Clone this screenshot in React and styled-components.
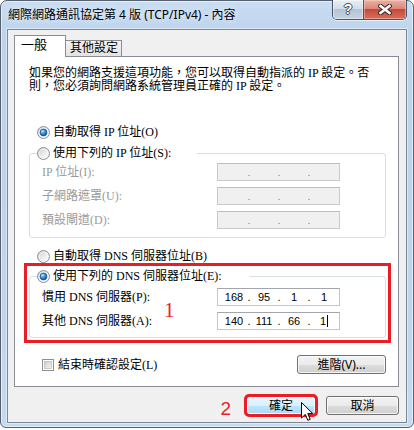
import React, { useId } from "react";
import styled, { createGlobalStyle, css } from "styled-components";

const UI = `"Noto Sans", "Noto Sans CJK TC", sans-serif`;
const BODY = `"Liberation Serif", "Noto Sans CJK TC", serif`;
const RED = "#ec1c24";

const Global = createGlobalStyle`
  html, body { margin: 0; padding: 0; background: #ffffff; }
  body { width: 414px; height: 430px; overflow: hidden; }
  *, *::before, *::after { box-sizing: border-box; }
`;

const Window = styled.div`
  width: 414px;
  height: 428px;
  border: 1px solid #56616d;
  border-radius: 7px 7px 6px 6px;
  background: linear-gradient(180deg, #c9ddf2 0%, #bcd3ec 36px, #bed5ed 70%, #c4daf1 100%);
  box-shadow: inset 0 0 0 1px rgba(255, 255, 255, 0.55);
  display: flex;
  flex-direction: column;
`;

const TitleBar = styled.div`
  height: 28px;
  display: flex;
  align-items: flex-start;
  padding: 0 6px 0 7px;
`;

const Title = styled.div`
  font-family: ${UI};
  font-size: 12px;
  line-height: 28px;
  color: #000;
  white-space: nowrap;
  text-shadow: 0 0 6px rgba(255, 255, 255, 0.95);
`;

const CaptionButtons = styled.div`
  margin-left: auto;
  margin-top: -1px;
  display: flex;
  height: 20px;
  border: 1px solid rgba(38, 52, 70, 0.8);
  border-top: none;
  border-radius: 0 0 5px 5px;
  overflow: hidden;
  box-shadow: 0 1px 0 rgba(255, 255, 255, 0.6);
`;

const HelpButton = styled.div`
  width: 31px;
  border-right: 1px solid rgba(38, 52, 70, 0.8);
  background: linear-gradient(180deg, #e9eef5 0%, #d3dce7 45%, #b6c3d3 50%, #c6d3e2 100%);
  box-shadow: inset 0 0 0 1px rgba(255, 255, 255, 0.45);
  display: flex;
  align-items: center;
  justify-content: center;
  font-family: "Liberation Sans", sans-serif;
  font-weight: bold;
  font-size: 14px;
  line-height: 19px;
  color: #fff;
  text-shadow: 1px 0 0 #3b4a5e, -1px 0 0 #3b4a5e, 0 1px 0 #3b4a5e, 0 -1px 0 #3b4a5e;
`;

const CloseButton = styled.div`
  width: 42px;
  background: linear-gradient(180deg, #eab1a4 0%, #dc8776 45%, #c7483a 50%, #d7705a 100%);
  box-shadow: inset 0 0 0 1px rgba(255, 220, 210, 0.45);
  display: flex;
  align-items: center;
  justify-content: center;
`;

const Client = styled.div`
  margin: 0 6px;
  height: 394px;
  border: 1px solid #7b8795;
  background: #f0f0f0;
  padding: 5px 7px 0 6px;
  box-shadow: 0 0 0 1px rgba(255, 255, 255, 0.45);
  display: flex;
  flex-direction: column;
`;

const TabStrip = styled.div`
  display: flex;
  align-items: flex-end;
  height: 21px;
  position: relative;
  z-index: 1;
`;

const Tab = styled.div`
  font-family: ${UI};
  color: #000;
  white-space: nowrap;
  border: 1px solid #898c95;
  border-bottom: none;
  ${(p) =>
    p.$active
      ? css`
          height: 22px;
          width: 52px;
          margin-bottom: -1px;
          background: #fff;
          font-size: 13px;
          line-height: 16px;
          padding-left: 6px;
          position: relative;
          z-index: 2;
        `
      : css`
          height: 16px;
          width: 57px;
          margin-left: -1px;
          font-size: 12px;
          line-height: 14px;
          padding-left: 4px;
          background: linear-gradient(180deg, #f3f3f3, #e3e3e3);
        `}
`;

const Panel = styled.div`
  height: 331px;
  border: 1px solid #898c95;
  background: #fff;
  padding: 0 12px 0 14px;
  display: flex;
  flex-direction: column;
`;

const Intro = styled.p`
  margin: 10px 0 0;
  font-family: ${BODY};
  font-size: 12px;
  line-height: 13px;
  color: #000;
  white-space: nowrap;
`;

const OptionRow = styled.div`
  display: flex;
  align-items: center;
  gap: 3px;
  height: 16px;
  padding-left: 8px;
  margin-top: ${(p) => p.$mt || 0}px;
  font-family: ${BODY};
  font-size: 12px;
  line-height: 16px;
  color: #000;
  white-space: nowrap;
`;

const Group = styled.fieldset`
  margin: ${(p) => p.$mt || 0}px 0 0;
  padding: ${(p) => p.$pt}px 0 ${(p) => p.$pb}px 0;
  border: 1px solid #d5dfe5;
  border-radius: 3px;
  min-width: 0;
  display: flex;
  flex-direction: column;
  gap: 6px;
`;

const Legend = styled.legend`
  margin-left: 7px;
  padding: 0;
  width: ${(p) => p.$w}px;
  height: 16px;
  display: flex;
  align-items: center;
  gap: 3px;
  font-family: ${BODY};
  font-size: 12px;
  line-height: 16px;
  color: #000;
  white-space: nowrap;
`;

const FieldRow = styled.div`
  display: grid;
  grid-template-columns: 175px 123px;
  align-items: center;
  padding-left: 12px;
  height: 18px;
  font-family: ${BODY};
  font-size: 12px;
  line-height: 16px;
  color: ${(p) => (p.$disabled ? "#9a9a9a" : "#000")};
  white-space: nowrap;
`;

const IpBox = styled.div`
  height: 18px;
  width: 123px;
  display: flex;
  align-items: center;
  padding-left: 3px;
  border: 1px solid ${(p) => (p.$disabled ? "#cacaca" : "#c3c6cc")};
  border-top-color: ${(p) => (p.$disabled ? "#bdbdbd" : "#a3a6ac")};
  background: ${(p) => (p.$disabled ? "#f0f0f0" : "#fff")};
  font-family: "Liberation Sans", sans-serif;
  font-size: 11px;
  line-height: 16px;
  color: ${(p) => (p.$disabled ? "#8a8a8a" : "#000")};
`;

const Octet = styled.span`
  width: 26px;
  display: flex;
  justify-content: center;
  align-items: center;
`;

const Dot = styled.span`
  width: 4px;
  text-align: center;
`;

const Caret = styled.span`
  display: inline-block;
  width: 1px;
  height: 12px;
  margin-left: 1px;
  background: #000;
`;

const Callout = styled.div`
  position: relative;
  margin: -1px -5px 0;
  border: 3px solid ${RED};
  padding: 2px;
`;

const Mark = styled.span`
  position: absolute;
  font-family: "Liberation Serif", serif;
  font-size: ${(p) => p.$size}px;
  line-height: 1;
  color: ${RED};
  left: ${(p) => p.$x}px;
  top: ${(p) => p.$y}px;
`;

const PanelFooter = styled.div`
  margin-top: 12px;
  display: flex;
  align-items: center;
  height: 19px;
`;

const CheckRow = styled.div`
  display: flex;
  align-items: center;
  gap: 4px;
  padding-left: 13px;
  font-family: ${BODY};
  font-size: 12px;
  line-height: 16px;
  color: #000;
  white-space: nowrap;
`;

const Btn = styled.button`
  height: 19px;
  width: ${(p) => p.$w}px;
  margin-left: ${(p) => (p.$auto ? "auto" : `${p.$ml || 0}px`)};
  padding: 0;
  border-radius: 3px;
  font-family: ${UI};
  font-size: 12px;
  line-height: 17px;
  color: #000;
  border: 1px solid ${(p) => (p.$hot ? "#3c7fb1" : "#707070")};
  background: ${(p) =>
    p.$hot
      ? "linear-gradient(180deg, #eaf6fd 0%, #d9f0fc 50%, #bee6fd 50%, #a7d9f5 100%)"
      : "linear-gradient(180deg, #f2f2f2 0%, #ebebeb 50%, #dddddd 50%, #cfcfcf 100%)"};
  box-shadow: inset 0 0 0 1px rgba(255, 255, 255, 0.75);
  outline: ${(p) => (p.$marked ? `3px solid ${RED}` : "none")};
  outline-offset: -1px;
  cursor: default;
`;

const DialogButtons = styled.div`
  margin-top: 9px;
  height: 22px;
  display: flex;
  align-items: flex-start;
  justify-content: flex-end;
`;

const StepLabel = styled.span`
  font-family: "Liberation Sans", sans-serif;
  font-size: 19px;
  line-height: 19px;
  padding-top: 3px;
  margin-right: 15px;
  color: ${RED};
`;

const OkWrap = styled.div`
  position: relative;
  display: flex;
`;

const Pointer = styled.svg`
  position: absolute;
  left: 55px;
  top: 6px;
`;

function Radio({ checked }) {
  const id = useId().replace(/[^a-zA-Z0-9]/g, "");
  return (
    <svg width="13" height="13" viewBox="0 0 13 13" style={{ flex: "none" }}>
      <defs>
        <linearGradient id={`rg${id}`} x1="0" y1="0" x2="1" y2="1">
          <stop offset="0" stopColor="#c9cdd2" />
          <stop offset="0.6" stopColor="#eeeff0" />
          <stop offset="1" stopColor="#fbfbfb" />
        </linearGradient>
        <radialGradient id={`rd${id}`} cx="0.35" cy="0.3" r="0.8">
          <stop offset="0" stopColor="#d2f1ff" />
          <stop offset="0.4" stopColor="#3a9fe6" />
          <stop offset="1" stopColor="#0d4c8e" />
        </radialGradient>
      </defs>
      <circle cx="6.5" cy="6.5" r="6" fill={`url(#rg${id})`} stroke="#8e9092" />
      <circle cx="6.5" cy="6.5" r="4.3" fill="none" stroke="#ffffff" strokeOpacity="0.5" />
      {checked && (
        <circle cx="6.5" cy="6.5" r="3.4" fill={`url(#rd${id})`} stroke="#1b4c80" strokeWidth="0.8" />
      )}
    </svg>
  );
}

function CheckBox() {
  const id = useId().replace(/[^a-zA-Z0-9]/g, "");
  return (
    <svg width="12" height="12" viewBox="0 0 12 12" style={{ flex: "none" }}>
      <defs>
        <linearGradient id={`cb${id}`} x1="0" y1="0" x2="1" y2="1">
          <stop offset="0" stopColor="#c8ccd1" />
          <stop offset="1" stopColor="#f6f6f6" />
        </linearGradient>
      </defs>
      <rect x="0.5" y="0.5" width="11" height="11" fill="#fff" stroke="#8e8f8f" />
      <rect x="2.5" y="2.5" width="7" height="7" fill={`url(#cb${id})`} stroke="#b4b8bd" strokeWidth="0.7" />
    </svg>
  );
}

function IpField({ values, disabled, caret }) {
  const parts = values || ["", "", "", ""];
  const out = [];
  parts.forEach((v, i) => {
    out.push(
      <Octet key={`o${i}`}>
        {v}
        {caret && i === 3 ? <Caret /> : null}
      </Octet>
    );
    if (i < 3) out.push(<Dot key={`d${i}`}>.</Dot>);
  });
  return <IpBox $disabled={disabled}>{out}</IpBox>;
}

export default function App() {
  return (
    <>
      <Global />
      <Window>
        <TitleBar>
          <Title>網際網路通訊協定第 4 版 (TCP/IPv4) - 內容</Title>
          <CaptionButtons>
            <HelpButton>?</HelpButton>
            <CloseButton>
              <svg width="14" height="11" viewBox="0 0 14 11">
                <path d="M2.5 2 L11.5 9 M11.5 2 L2.5 9" stroke="#3b2724" strokeWidth="4.6" strokeLinecap="square" />
                <path d="M2.5 2 L11.5 9 M11.5 2 L2.5 9" stroke="#ffffff" strokeWidth="2.6" strokeLinecap="square" />
              </svg>
            </CloseButton>
          </CaptionButtons>
        </TitleBar>

        <Client>
          <TabStrip>
            <Tab $active>一般</Tab>
            <Tab>其他設定</Tab>
          </TabStrip>

          <Panel>
            <Intro>
              如果您的網路支援這項功能，您可以取得自動指派的 IP 設定。否
              <br />
              則，您必須詢問網路系統管理員正確的 IP 設定。
            </Intro>

            <OptionRow $mt={31}>
              <Radio checked />
              <span>自動取得 IP 位址(O)</span>
            </OptionRow>

            <Group $mt={5} $pt={2} $pb={8}>
              <Legend $w={160}>
                <Radio />
                <span>使用下列的 IP 位址(S):</span>
              </Legend>
              <FieldRow $disabled>
                <span>IP 位址(I):</span>
                <IpField disabled />
              </FieldRow>
              <FieldRow $disabled>
                <span>子網路遮罩(U):</span>
                <IpField disabled />
              </FieldRow>
              <FieldRow $disabled>
                <span>預設閘道(D):</span>
                <IpField disabled />
              </FieldRow>
            </Group>

            <OptionRow $mt={10}>
              <Radio />
              <span>自動取得 DNS 伺服器位址(B)</span>
            </OptionRow>

            <Callout>
              <Group $pt={4} $pb={7}>
                <Legend $w={213}>
                  <Radio checked />
                  <span>使用下列的 DNS 伺服器位址(E):</span>
                </Legend>
                <FieldRow>
                  <span>慣用 DNS 伺服器(P):</span>
                  <IpField values={["168", "95", "1", "1"]} />
                </FieldRow>
                <FieldRow>
                  <span>其他 DNS 伺服器(A):</span>
                  <IpField values={["140", "111", "66", "1"]} caret />
                </FieldRow>
              </Group>
              <Mark $size={21} $x={137} $y={34}>1</Mark>
            </Callout>

            <PanelFooter>
              <CheckRow>
                <CheckBox />
                <span>結束時確認設定(L)</span>
              </CheckRow>
              <Btn $w={89} $auto>進階(V)...</Btn>
            </PanelFooter>
          </Panel>

          <DialogButtons>
            <StepLabel>2</StepLabel>
            <OkWrap>
              <Btn $w={70} $hot $marked>確定</Btn>
              <Pointer width="13" height="20" viewBox="0 0 13 20">
                <path
                  d="M0.5 0.5 L0.5 16 L4.3 12.4 L6.8 18.3 L9.2 17.3 L6.8 11.6 L11.8 11.6 Z"
                  fill="#ffffff"
                  stroke="#000000"
                  strokeWidth="1"
                />
              </Pointer>
            </OkWrap>
            <Btn $w={73} $ml={10}>取消</Btn>
          </DialogButtons>
        </Client>
      </Window>
    </>
  );
}
